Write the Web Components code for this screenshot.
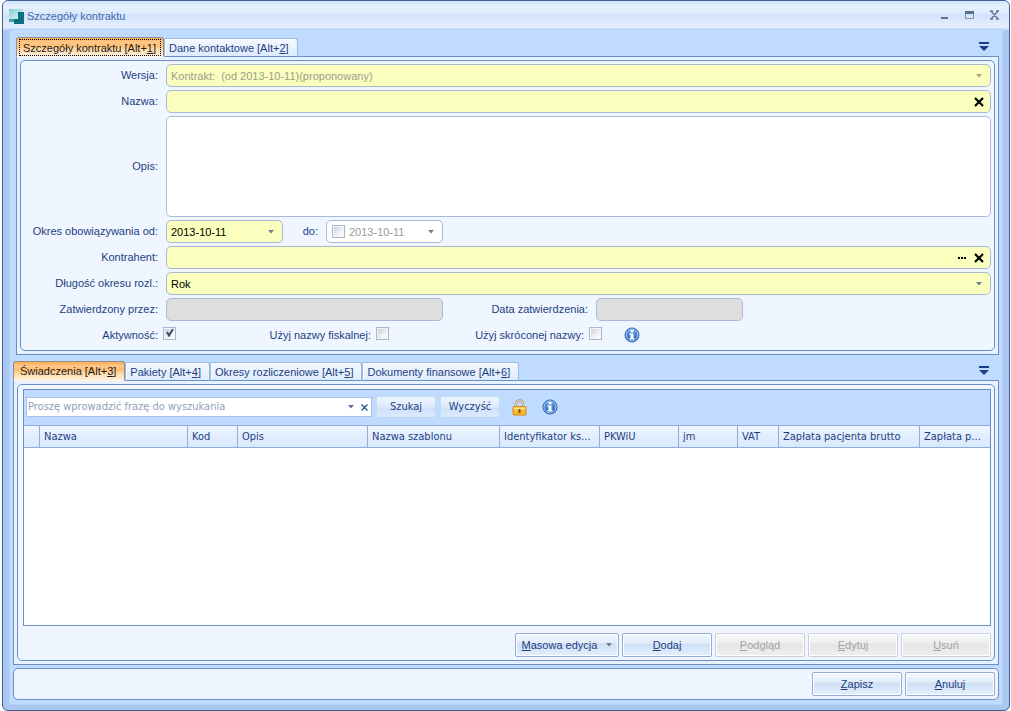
<!DOCTYPE html>
<html lang="pl">
<head>
<meta charset="utf-8">
<title>Szczegóły kontraktu</title>
<style>
  html { background: #fff; }
  body {
    margin: 0;
    font: 11px/14px "Liberation Sans", Arial, sans-serif;
    color: #1e3f7f;
    --ui-font: 11px/14px "Liberation Sans", Arial, sans-serif;
    --grid-font: 11px/14px "DejaVu Sans Condensed", "DejaVu Sans", sans-serif;
    --line: #6b8fc4;
    --face: #eff6ff;
    --sky: #bfdbff;
    --required: #faffbd;
    --field-line: #abb9d8;
  }
</style>
</head>
<body>
<app-window heading="Szczegóły kontraktu">
  <tab-pages class="contract" top>
    <tab-button slot="tab" selected focused text="Szczegóły kontraktu" key="1"></tab-button>
    <tab-button slot="tab" text="Dane kontaktowe" key="2"></tab-button>
    <contract-form></contract-form>
  </tab-pages>
  <tab-pages fill>
    <tab-button slot="tab" selected text="Świadczenia" key="3"></tab-button>
    <tab-button slot="tab" text="Pakiety" key="4"></tab-button>
    <tab-button slot="tab" text="Okresy rozliczeniowe" key="5"></tab-button>
    <tab-button slot="tab" text="Dokumenty finansowe" key="6"></tab-button>
    <services-list></services-list>
  </tab-pages>
  <dialog-footer>
    <push-button text="Zapisz"></push-button>
    <push-button text="Anuluj"></push-button>
  </dialog-footer>
</app-window>

<script>
  const arrow = '<svg class="arrow" width="6" height="4" viewBox="0 0 6 4" aria-hidden="true"><path d="M0 0h6L3 3.5z" fill="currentColor"/></svg>';
  const cross = '<svg width="10" height="10" viewBox="0 0 10 10" aria-hidden="true"><path d="M1 1l8 8M9 1L1 9" stroke="#000" stroke-width="2.2" fill="none"/></svg>';

  function define(name, render) {
    customElements.define(name, class extends HTMLElement {
      connectedCallback() {
        if (this.shadowRoot) return;
        const root = this.attachShadow({ mode: 'open' });
        const template = document.createElement('template');
        template.innerHTML = render(this);
        root.append(template.content.cloneNode(true));
      }
    });
  }
  const attr = (el, name, fallback = '') => el.getAttribute(name) ?? fallback;

  define('app-window', el => `
    <style>
      :host { display: block; padding: 0 1px 0 2px; }
      .frame { box-sizing: border-box; display: flex; flex-direction: column; min-height: 100vh;
        border: 1px solid #3d5f94; border-radius: 6px; overflow: hidden; background: #abc8f0; }
      header { display: flex; align-items: center; height: 29px; box-sizing: border-box; flex: none;
        padding: 2px 9px 0 6px; border-bottom: 1px solid #cfe1fa;
        background: linear-gradient(#d3e4fb 0, #e6f0fe 6px, #dbe9fc 13px, #cfe2fb 14px, #dce9fb 20px, #e3eefe 27px, #b5d0f5 28px); }
      h1 { flex: 1; margin: 0; font: var(--ui-font); color: #3e6aaa; }
      .logo { margin-right: 3px; }
      .controls { display: flex; gap: 14px; margin-bottom: 2px; }
      .controls button { border: 0; padding: 0; background: none; width: 11px; height: 11px; display: flex; }
      main { flex: 1; display: flex; flex-direction: column; margin: 0 7px 6px; padding: 7px 3px 4px 3px; background: var(--sky); box-shadow: 0 0 0 1px #b4d1fa; }
    </style>
    <div class="frame">
      <header>
        <svg class="logo" width="15" height="16" viewBox="0 0 15 16" aria-hidden="true">
          <defs><linearGradient id="l" x2="1" y2="1"><stop offset="0" stop-color="#7fd0d0"/><stop offset="1" stop-color="#e0f6f6"/></linearGradient></defs>
          <path d="M0 1h14v3H9v7H0z" fill="url(#l)"/>
          <path d="M9 4h6v12H5v-5h4z" fill="#0b6f82"/><path d="M0 11h5v3H0z" fill="#3aa7ab"/>
        </svg>
        <h1>${attr(el, 'heading')}</h1>
        <div class="controls">
          <button aria-label="Minimalizuj"><svg width="11" height="11"><path d="M2 7h7v2H2z" fill="#5b6f8e"/></svg></button>
          <button aria-label="Maksymalizuj"><svg width="11" height="11"><path d="M1.500 2.500h8v6h-8z" fill="none" stroke="#8391a9"/><path d="M1 1h9v3H1z" fill="#5b6f8e"/></svg></button>
          <button aria-label="Zamknij"><svg width="11" height="11"><path d="M2 1l7 8M9 1l-7 8M1 1h3M7 1h3M1 9h3M7 9h3" fill="none" stroke="#66799a" stroke-width="1.400"/></svg></button>
        </div>
      </header>
      <main><slot></slot></main>
    </div>`);

  define('tab-pages', () => `
    <style>
      :host { display: flex; flex-direction: column; }
      :host([top]) { margin: 0 0 6px 3px; }
      :host([fill]) { flex: 1; }
      .strip { position: relative; z-index: 1; display: flex; align-items: flex-end; margin-bottom: -1px; height: 20px; }
      .more { margin: 0 10px 6px auto; border: 0; padding: 0; background: none; display: flex; }
      .page { flex: 1; display: flex; flex-direction: column; border: 1px solid var(--line); padding: 3px; background: #e6f2ff; }
      .body { flex: 1; display: flex; flex-direction: column; border: 1px solid var(--line); border-radius: 5px; background: var(--face); padding: 3px; }
      :host([fill]) .body { padding: 4px 3px 3px 5px; }
    </style>
    <div class="strip" role="tablist">
      <slot name="tab"></slot>
      <button class="more" aria-label="Lista kart"><svg width="10" height="10"><path d="M0 1h10v2H0zM0 5h10L5 10z" fill="#1a3f87"/></svg></button>
    </div>
    <div class="page"><div class="body"><slot></slot></div></div>`);

  define('tab-button', el => `
    <style>
      :host { display: block; }
      button { box-sizing: border-box; height: 19px; border: 1px solid #9db9e0; border-bottom-color: var(--line); border-radius: 2px 3px 0 0;
        padding: 1px 8px 0 4px; margin: 0; font: var(--ui-font); color: #1e3f7f; white-space: nowrap;
        background: linear-gradient(#f4f9ff, #deebfd); box-shadow: inset 1px 1px #fff; display: block; }
      :host([selected]) button { height: 20px; padding: 0 8px 0 6px; color: #1b1b1b; border-color: #8c8e9c; border-bottom-color: #fff3e0; border-radius: 3px 3px 0 0;
        background: linear-gradient(#ffab4a 0, #ffc88b 4px, #ffbe70 8px, #ffd7a5 11px, #fff3e2 19px); box-shadow: none; }
      :host([focused]) button { padding: 0 2px; }
      :host([focused]) span { display: block; border: 1px dotted #000; padding: 1px 4px 0 3px; }
    </style>
    <button role="tab" aria-selected="${el.hasAttribute('selected')}"><span>${attr(el, 'text')} [Alt+<u>${attr(el, 'key')}</u>]</span></button>`);

  define('form-row', () => `
    <style>:host { display: flex; min-height: 23px; align-items: stretch; }</style><slot></slot>`);

  define('form-field', el => {
    const kind = attr(el, 'kind', 'text');
    const value = attr(el, 'value');
    const off = el.hasAttribute('off') ? 'disabled' : '';
    const on = el.hasAttribute('checked') ? 'checked' : '';
    const controls = {
      text: `<input id="c" class="edit" type="text" value="${value}" ${off}>`,
      area: '<textarea id="c"></textarea>',
      select: `<select id="c" ${off}><option>${value}</option></select>${arrow}`,
      date: `${el.hasAttribute('optional') ? '<input type="checkbox" aria-label="Określ datę końcową">' : ''}<input id="c" class="edit" type="text" value="${value}" ${off}><button class="drop" aria-label="Kalendarz">${arrow}</button>`,
      check: `<input id="c" type="checkbox" ${on}>`
    };
    const tools = (el.hasAttribute('browse') ? '<button aria-label="Wybierz"><svg width="9" height="10"><path d="M0 4h2v2H0zM3 4h2v2H3zM6 4h2v2H6z" fill="#000"/></svg></button>' : '')
      + (el.hasAttribute('clear') ? `<button class="clear" aria-label="Wyczyść pole">${cross}</button>` : '');
    return `
    <style>
      :host { display: flex; gap: 8px; }
      :host([grow]) { flex: 1; }
      :host([kind="check"]) { gap: 5px; }
      label { flex: none; width: ${attr(el, 'label-width', '134')}px; align-self: center; text-align: right; white-space: nowrap; padding-bottom: 2px; box-sizing: border-box; }
      .box { box-sizing: border-box; position: relative; display: flex; align-items: center; width: ${attr(el, 'width', '100')}px;
        border: 1px solid var(--field-line); border-radius: 5px; background: #fff; color: #000; }
      :host([grow]) .box { width: auto; flex: 1; }
      :host([required]) .box { background: var(--required); }
      :host([grey]) .box { background: #dedede; }
      :host([area]) .box { height: 101px; }
      .edit, select, textarea { flex: 1; min-width: 0; border: 0; outline: 0; margin: 0; padding: 1px 4px 0; background: none; font: var(--ui-font); color: #000; appearance: none; opacity: 1; }
      select { height: 21px; }
      textarea { height: 97px; resize: none; }
      .edit:disabled, select:disabled { color: #9d9d91; }
      .arrow { color: #71809a; flex: none; margin-right: 8px; pointer-events: none; }
      :host([off][kind="select"]) .arrow { color: #a2a489; }
      button { border: 0; padding: 0; margin: 0 7px 0 0; background: none; display: flex; }
      button.clear { margin-right: 6px; }
      button.drop { margin: 0; }
      .box.check { border: 0; width: 13px; background: none; }
      input[type="checkbox"] { appearance: none; box-sizing: border-box; flex: none; width: 13px; height: 13px; margin: 0; border: 1px solid #a9b8cf;
        background: linear-gradient(135deg, #c9ccd3, #f7f7f7 70%); box-shadow: inset 0 0 0 1px #f2f5fa; }
      .check input[type="checkbox"] { margin-bottom: 4px; }
      .date input[type="checkbox"] { margin-left: 5px; }
      .check svg { position: absolute; left: 3px; top: 5px; pointer-events: none; }
    </style>
    <label for="c">${attr(el, 'label')}</label>
    <div class="box ${kind}">${controls[kind]}${on ? '<svg width="8" height="8"><path d="M1 3l2 3.500L7 0" fill="none" stroke="#3c4a6b" stroke-width="2"/></svg>' : ''}${tools}</div>`;
  });

  define('info-icon', () => `
    <style>:host { display: flex; align-items: center; }</style>
    <svg width="16" height="16" viewBox="0 0 16 16" role="img" aria-label="Informacja">
      <defs><linearGradient id="g" x2="0" y2="1"><stop offset="0" stop-color="#6aa3e3"/><stop offset="1" stop-color="#1d62bf"/></linearGradient></defs>
      <circle cx="8" cy="8" r="7" fill="url(#g)" stroke="#2159a8"/><circle cx="8" cy="8" r="6" fill="none" stroke="#a9cdf5"/>
      <path d="M6.500 3h3v2.500h-3zM5.500 6.500h4V11h1v1.500h-5V11h1V8h-1z" fill="#fff"/>
    </svg>`);

  define('contract-form', () => `
    <style>
      :host { display: flex; flex-direction: column; gap: 3px; }
      .info { margin: 0 0 2px 22px; }
    </style>
    <form-row><form-field label="Wersja:" kind="select" value="Kontrakt:&nbsp; (od 2013-10-11)(proponowany)" off required grow></form-field></form-row>
    <form-row><form-field label="Nazwa:" required grow clear></form-field></form-row>
    <form-row><form-field label="Opis:" kind="area" area grow></form-field></form-row>
    <form-row>
      <form-field label="Okres obowiązywania od:" kind="date" value="2013-10-11" width="117" required></form-field>
      <form-field label="do:" label-width="35" kind="date" value="2013-10-11" width="117" optional off></form-field>
    </form-row>
    <form-row><form-field label="Kontrahent:" required grow browse clear></form-field></form-row>
    <form-row><form-field label="Długość okresu rozl.:" kind="select" value="Rok" required grow></form-field></form-row>
    <form-row>
      <form-field label="Zatwierdzony przez:" width="277" grey off></form-field>
      <form-field label="Data zatwierdzenia:" label-width="145" width="147" grey off></form-field>
    </form-row>
    <form-row>
      <form-field label="Aktywność:" kind="check" checked></form-field>
      <form-field label="Użyj nazwy fiskalnej:" label-width="195" kind="check"></form-field>
      <form-field label="Użyj skróconej nazwy:" label-width="195" kind="check"></form-field>
      <info-icon class="info"></info-icon>
    </form-row>`);

  define('push-button', el => {
    const text = attr(el, 'text');
    const label = el.hasAttribute('flat') ? text : `<u>${text[0]}</u>${text.slice(1)}`;
    return `
    <style>
      :host { display: block; }
      button { box-sizing: border-box; display: flex; align-items: center; justify-content: center; width: ${attr(el, 'width', '90')}px; height: 24px; margin: 0; padding: 0;
        border: 1px solid #92acd5; border-radius: 2px; font: var(--ui-font); color: #1e3f7f; box-shadow: inset 0 0 0 1px #fff;
        background: linear-gradient(#f3f7fd 0, #e3edfa 9px, #cfdff5 10px, #e4effd 100%); }
      :host([flat]) button { height: 22px; border-color: #c3d8f5; font: var(--grid-font); box-shadow: none; background: linear-gradient(#eef5ff 0, #dfebfc 10px, #cfe0f8 11px, #dceafd 100%); }
      button:disabled { color: #a3a3a3; border-color: #c8cfda; background: linear-gradient(#f8f8f8 0, #efefef 9px, #e6e6e6 10px, #eeeeee 100%); }
      .arrow { color: #6c7c98; margin-left: 9px; }
    </style>
    <button ${el.hasAttribute('off') ? 'disabled' : ''}><span>${label}</span>${el.hasAttribute('menu') ? arrow : ''}</button>`;
  });

  define('search-box', () => `
    <style>
      :host { display: flex; align-items: center; box-sizing: border-box; width: 346px; height: 20px; background: #fff; border: 1px solid #a9c3e8; }
      input { flex: 1; min-width: 0; border: 0; outline: 0; padding: 0 1px; background: none; font: var(--grid-font); }
      input::placeholder { color: #8fa1bd; opacity: 1; }
      button { display: flex; border: 0; padding: 0; margin: 0 3px 0 0; background: none; color: #6078a0; }
      .drop { margin-right: 7px; }
    </style>
    <input type="text" aria-label="Szukaj" placeholder="Proszę wprowadzić frazę do wyszukania">
    <button class="drop" aria-label="Historia wyszukiwania">${arrow}</button>
    <button aria-label="Usuń frazę"><svg width="7" height="7"><path d="M.5.5l6 6M6.500.5l-6 6" stroke="#2f5597" stroke-width="1.400"/></svg></button>`);

  define('data-grid', el => {
    const columns = [['', 16], ['Nazwa', 0], ['Kod', 50], ['Opis', 130], ['Nazwa szablonu', 132], ['Identyfikator ks...', 100], ['PKWiU', 79], ['jm', 59], ['VAT', 41], ['Zapłata pacjenta brutto', 141], ['Zapłata p...', 70]];
    return `
    <style>
      :host { display: block; flex: 1; background: #fff; }
      table { width: 100%; border-collapse: separate; border-spacing: 0; table-layout: fixed; }
      th { box-sizing: border-box; height: 23px; padding: 0 0 0 4px; text-align: left; font: var(--grid-font); font-weight: normal; color: #1e3f7f; white-space: nowrap; overflow: hidden;
        border-top: 1px solid #8fabd6; border-bottom: 1px solid #8fabd6; border-right: 1px solid #8fabd6; background: linear-gradient(#eff6ff, #e2eefe 10px, #d9e8fd); }
      th:last-child { border-right: 0; }
    </style>
    <table>
      <colgroup>${columns.map(c => c[1] ? `<col style="width:${c[1]}px">` : '<col>').join('')}</colgroup>
      <thead><tr>${columns.map(c => `<th scope="col">${c[0]}</th>`).join('')}</tr></thead>
      <tbody></tbody>
    </table>`;
  });

  define('services-list', () => `
    <style>
      :host { flex: 1; display: flex; flex-direction: column; }
      .list { flex: 1; display: flex; flex-direction: column; border: 1px solid var(--line); background: var(--sky); }
      .tools { display: flex; align-items: center; gap: 4px; padding: 6px 2px 7px; height: 22px; }
      .lock { margin-left: 8px; }
      .tools info-icon { margin-left: 11px; }
      .actions { display: flex; justify-content: flex-end; gap: 3px; padding-top: 7px; }
    </style>
    <div class="list">
      <div class="tools">
        <search-box></search-box>
        <push-button flat text="Szukaj" width="60"></push-button>
        <push-button flat text="Wyczyść" width="60"></push-button>
        <svg class="lock" width="15" height="17" viewBox="0 0 15 17" role="img" aria-label="Blokada">
          <path d="M4 8V5a3.500 3.500 0 0 1 7 0v3" fill="none" stroke="#a39a86" stroke-width="2.600"/><path d="M4 8V5a3.500 3.500 0 0 1 7 0v3" fill="none" stroke="#efebdf" stroke-width="1"/>
          <rect x="1" y="7.500" width="13" height="8.500" rx="1" fill="#f7b52c" stroke="#d98a1b"/><path d="M2 8.500h11v2H2z" fill="#ffe08a"/><path d="M6.500 10h2v4h-2z" fill="#7a4c10"/>
        </svg>
        <info-icon></info-icon>
      </div>
      <data-grid></data-grid>
    </div>
    <div class="actions">
      <push-button text="Masowa edycja" width="104" menu></push-button>
      <push-button text="Dodaj"></push-button>
      <push-button text="Podgląd" off></push-button>
      <push-button text="Edytuj" off></push-button>
      <push-button text="Usuń" off></push-button>
    </div>`);

  define('dialog-footer', () => `
    <style>
      :host { display: flex; justify-content: flex-end; gap: 3px; margin-top: 3px; padding: 3px; border: 1px solid var(--line); border-radius: 5px; background: var(--face); }
    </style><slot></slot>`);
</script>
</body>
</html>
